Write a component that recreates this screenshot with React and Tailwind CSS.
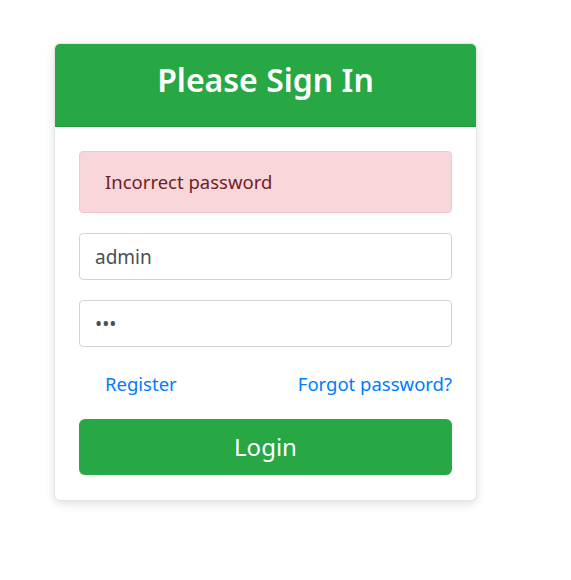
import React, { useState } from 'react';

export default function App() {
  const [username, setUsername] = useState('admin');
  const [password, setPassword] = useState('abc');

  return (
    <div className="min-h-[580px] w-[571px] bg-white pt-[43px] pl-[54px]" style={{ fontFamily: '"Noto Sans", "Open Sans", sans-serif' }}>
      <div className="w-[423px] rounded-md border border-black/10 bg-white shadow-[0_3px_10px_rgba(0,0,0,0.12)] overflow-hidden">
        <div className="h-[83px] bg-[#28a745] border-b border-black/10 flex items-center justify-center pb-[10px]">
          <h2 className="text-[32px] font-semibold text-white leading-none">Please Sign In</h2>
        </div>

        <div className="px-6 pt-6 pb-[25px]">
          <div className="h-[62px] flex items-center px-[25px] rounded border border-[#f5c6cb] bg-[#f8d7da] text-[18.5px] text-[#721c24]">
            Incorrect password
          </div>

          <input
            value={username}
            onChange={e => setUsername(e.target.value)}
            className="mt-5 block w-full h-[47px] px-[15px] rounded border border-[#ced4da] text-[19px] text-[#495057] focus:outline-none"
          />
          <input
            type="password"
            value={password}
            onChange={e => setPassword(e.target.value)}
            className="mt-5 block w-full h-[47px] px-[15px] rounded border border-[#ced4da] text-[19px] text-[#495057] focus:outline-none"
          />

          <div className="mt-[22px] flex items-center justify-between pl-[26px] text-[18.5px] text-[#007bff]">
            <a href="#" className="leading-[30px]">Register</a>
            <a href="#" className="leading-[30px]">Forgot password?</a>
          </div>

          <button className="mt-5 block w-full h-[56px] rounded-md bg-[#28a745] text-white text-[24px]">
            Login
          </button>
        </div>
      </div>
    </div>
  );
}
